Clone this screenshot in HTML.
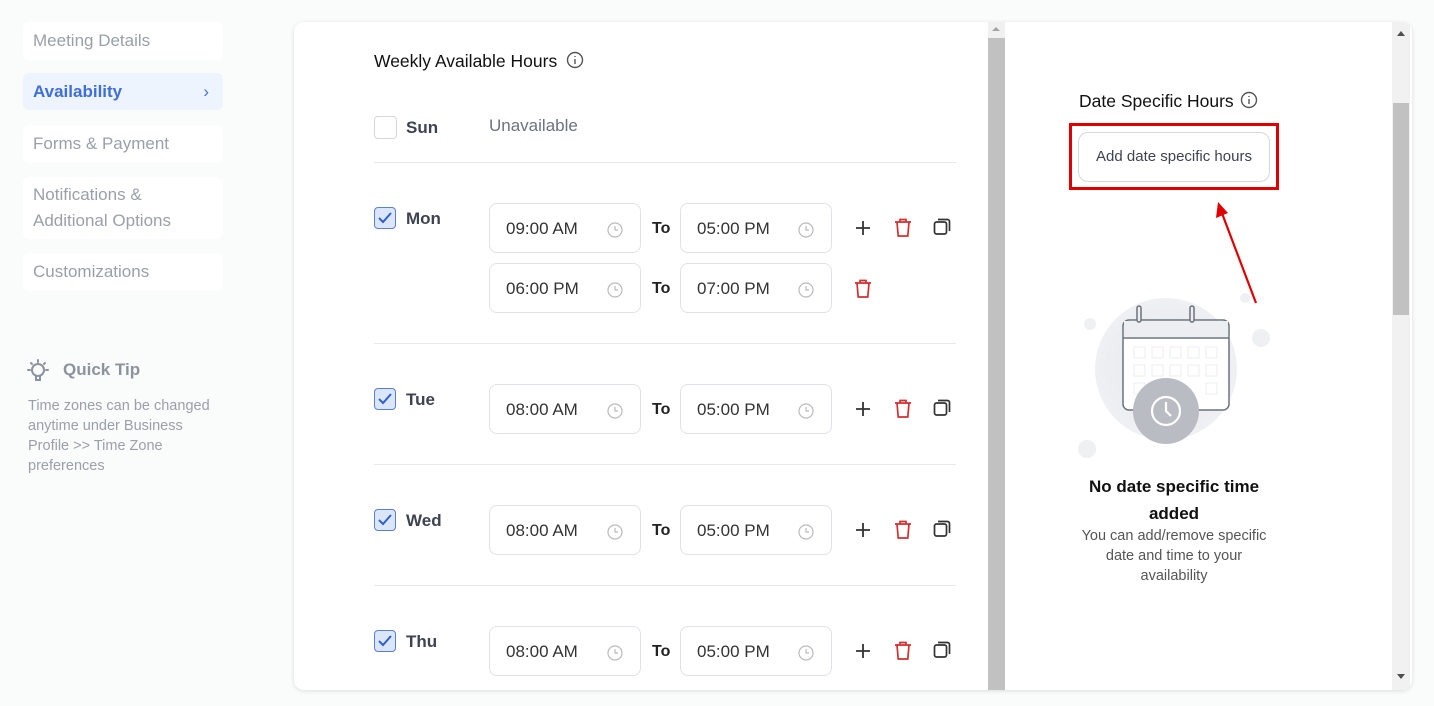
<!DOCTYPE html>
<html><head><meta charset="utf-8"><style>
*{box-sizing:border-box;margin:0;padding:0}
body{width:1434px;height:706px;background:#fafbfb;font-family:"Liberation Sans",sans-serif;position:relative;overflow:hidden}
.a{position:absolute}
.nav{position:absolute;left:23px;width:200px;background:#fff;border-radius:6px;color:#9aa0aa;font-size:17px;padding-left:10px}
.card{position:absolute;left:294px;top:22px;width:1118px;height:668px;background:#fff;border-radius:10px;box-shadow:0 1px 4px rgba(0,0,0,.12);overflow:hidden}
.cb{position:absolute;width:22px;height:22px;border-radius:4px;border:1.5px solid #5a7fd6;background:#dbe6fb}
.cb svg{position:absolute;left:3px;top:4px}
.day{position:absolute;font-size:17px;font-weight:bold;color:#3d4350}
.inp{position:absolute;width:152px;height:50px;border:1px solid #dfe2e6;border-radius:8px;font-size:17px;color:#333;padding:15px 0 0 16px}
.inp svg{position:absolute;right:17px;top:18px}
.to{position:absolute;font-size:16px;font-weight:bold;color:#222}
.hr{position:absolute;left:374px;width:582px;height:1px;background:#e6e8eb}
</style></head><body>
<div class="nav" style="top:22px;height:38px;line-height:38px">Meeting Details</div>
<div class="nav" style="top:73px;height:37px;line-height:37px;background:#eef4fd;color:#3e6fd8;font-weight:bold">Availability<span class="a" style="right:14px;top:0;font-weight:normal">&#x203A;</span></div>
<div class="nav" style="top:125px;height:38px;line-height:38px">Forms &amp; Payment</div>
<div class="nav" style="top:177px;height:62px;line-height:26px;padding-top:5px">Notifications &amp;<br>Additional Options</div>
<div class="nav" style="top:253px;height:38px;line-height:38px">Customizations</div>
<svg class="a" style="left:25px;top:358px" width="26" height="26" viewBox="0 0 26 26" fill="none" stroke="#8d939d" stroke-width="2"><circle cx="13" cy="12" r="6"/><path d="M11 18v4h4v-4"/><path d="M13 2v2M3 12h2M21 12h2M6 5l1 1M20 5l-1 1" stroke-linecap="round"/></svg>
<div class="a" style="left:63px;top:360px;font-size:17px;font-weight:bold;color:#8d939d">Quick Tip</div>
<div class="a" style="left:28px;top:396px;font-size:14.5px;line-height:20px;color:#9aa0aa;width:188px">Time zones can be changed anytime under Business Profile &gt;&gt; Time Zone preferences</div>

<div class="card">
 <div class="a" style="left:694px;top:0;width:17px;height:668px;background:#f1f1f1"></div>
 <div class="a" style="left:694px;top:16px;width:17px;height:652px;background:#c1c1c1"></div>
 <div class="a" style="left:698px;top:5px;width:0;height:0;border-left:4px solid transparent;border-right:4px solid transparent;border-bottom:4px solid #a3a3a3"></div>
 <div class="a" style="left:1098px;top:0;width:18px;height:668px;background:#f1f1f1"></div>
 <div class="a" style="left:1099px;top:81px;width:16px;height:212px;background:#c1c1c1"></div>
 <div class="a" style="left:1103px;top:9px;border-left:4px solid transparent;border-right:4px solid transparent;border-bottom:5px solid #505050"></div>
 <div class="a" style="left:1103px;top:652px;border-left:4px solid transparent;border-right:4px solid transparent;border-top:5px solid #505050"></div>
</div>

<div class="a" style="left:374px;top:51px;font-size:17.5px;color:#111">Weekly Available Hours</div>
<svg class="a" style="left:566px;top:51px" width="18" height="18" viewBox="0 0 18 18" fill="none" stroke="#555" stroke-width="1.4"><circle cx="9" cy="9" r="7.5"/><path d="M9 8v5M9 5v1"/></svg>
<div class="a" style="left:374px;top:116px;width:23px;height:23px;border:1.5px solid #d4d7dc;border-radius:4px"></div>
<div class="day" style="left:406px;top:118px">Sun</div>
<div class="a" style="left:489px;top:116px;font-size:17px;color:#6b7280">Unavailable</div>
<div class="hr" style="top:162px"></div>

<div class="cb" style="left:374px;top:207px"><svg width="14" height="12" viewBox="0 0 14 12" fill="none" stroke="#2f5fcf" stroke-width="2"><path d="M1 6l4 4 8-9"/></svg></div>
<div class="day" style="left:406px;top:209px">Mon</div>
<div class="cb" style="left:374px;top:388px"><svg width="14" height="12" viewBox="0 0 14 12" fill="none" stroke="#2f5fcf" stroke-width="2"><path d="M1 6l4 4 8-9"/></svg></div>
<div class="day" style="left:406px;top:390px">Tue</div>
<div class="cb" style="left:374px;top:509px"><svg width="14" height="12" viewBox="0 0 14 12" fill="none" stroke="#2f5fcf" stroke-width="2"><path d="M1 6l4 4 8-9"/></svg></div>
<div class="day" style="left:406px;top:511px">Wed</div>
<div class="cb" style="left:374px;top:630px"><svg width="14" height="12" viewBox="0 0 14 12" fill="none" stroke="#2f5fcf" stroke-width="2"><path d="M1 6l4 4 8-9"/></svg></div>
<div class="day" style="left:406px;top:632px">Thu</div>
<div class="hr" style="top:343px"></div>
<div class="hr" style="top:464px"></div>
<div class="hr" style="top:585px"></div>

<div class="inp" style="left:489px;top:203px">09:00 AM<svg width="16" height="16" viewBox="0 0 16 16" fill="none" stroke="#bbb" stroke-width="1.2"><circle cx="8" cy="8" r="7"/><path d="M8 4v4h3"/></svg></div>
<div class="to" style="left:652px;top:220px">To</div>
<div class="inp" style="left:680px;top:203px">05:00 PM<svg width="16" height="16" viewBox="0 0 16 16" fill="none" stroke="#bbb" stroke-width="1.2"><circle cx="8" cy="8" r="7"/><path d="M8 4v4h3"/></svg></div>
<div class="inp" style="left:489px;top:263px">06:00 PM<svg width="16" height="16" viewBox="0 0 16 16" fill="none" stroke="#bbb" stroke-width="1.2"><circle cx="8" cy="8" r="7"/><path d="M8 4v4h3"/></svg></div>
<div class="to" style="left:652px;top:280px">To</div>
<div class="inp" style="left:680px;top:263px">07:00 PM<svg width="16" height="16" viewBox="0 0 16 16" fill="none" stroke="#bbb" stroke-width="1.2"><circle cx="8" cy="8" r="7"/><path d="M8 4v4h3"/></svg></div>

<div class="inp" style="left:489px;top:384px">08:00 AM<svg width="16" height="16" viewBox="0 0 16 16" fill="none" stroke="#bbb" stroke-width="1.2"><circle cx="8" cy="8" r="7"/><path d="M8 4v4h3"/></svg></div>
<div class="to" style="left:652px;top:401px">To</div>
<div class="inp" style="left:680px;top:384px">05:00 PM<svg width="16" height="16" viewBox="0 0 16 16" fill="none" stroke="#bbb" stroke-width="1.2"><circle cx="8" cy="8" r="7"/><path d="M8 4v4h3"/></svg></div>
<div class="inp" style="left:489px;top:505px">08:00 AM<svg width="16" height="16" viewBox="0 0 16 16" fill="none" stroke="#bbb" stroke-width="1.2"><circle cx="8" cy="8" r="7"/><path d="M8 4v4h3"/></svg></div>
<div class="to" style="left:652px;top:522px">To</div>
<div class="inp" style="left:680px;top:505px">05:00 PM<svg width="16" height="16" viewBox="0 0 16 16" fill="none" stroke="#bbb" stroke-width="1.2"><circle cx="8" cy="8" r="7"/><path d="M8 4v4h3"/></svg></div>
<div class="inp" style="left:489px;top:626px">08:00 AM<svg width="16" height="16" viewBox="0 0 16 16" fill="none" stroke="#bbb" stroke-width="1.2"><circle cx="8" cy="8" r="7"/><path d="M8 4v4h3"/></svg></div>
<div class="to" style="left:652px;top:643px">To</div>
<div class="inp" style="left:680px;top:626px">05:00 PM<svg width="16" height="16" viewBox="0 0 16 16" fill="none" stroke="#bbb" stroke-width="1.2"><circle cx="8" cy="8" r="7"/><path d="M8 4v4h3"/></svg></div>

<svg class="a" style="left:854px;top:219px" width="18" height="18" viewBox="0 0 18 18" stroke="#333" stroke-width="1.8"><path d="M9 2v14M2 9h14"/></svg>
<svg class="a" style="left:894px;top:218px" width="18" height="20" viewBox="0 0 18 20" fill="none" stroke="#d32f2f" stroke-width="1.7"><path d="M1 4h16M6 4V1.5h6V4M3 4l1.2 14h9.6L15 4"/></svg>
<svg class="a" style="left:933px;top:217px" width="19" height="19" viewBox="0 0 19 19" fill="none" stroke="#333" stroke-width="1.7"><rect x="1.5" y="5" width="12" height="12" rx="2"/><path d="M5 2.5h9.5a2 2 0 0 1 2 2V14"/></svg>
<svg class="a" style="left:854px;top:279px" width="18" height="20" viewBox="0 0 18 20" fill="none" stroke="#d32f2f" stroke-width="1.7"><path d="M1 4h16M6 4V1.5h6V4M3 4l1.2 14h9.6L15 4"/></svg>

<svg class="a" style="left:854px;top:400px" width="18" height="18" viewBox="0 0 18 18" stroke="#333" stroke-width="1.8"><path d="M9 2v14M2 9h14"/></svg>
<svg class="a" style="left:894px;top:399px" width="18" height="20" viewBox="0 0 18 20" fill="none" stroke="#d32f2f" stroke-width="1.7"><path d="M1 4h16M6 4V1.5h6V4M3 4l1.2 14h9.6L15 4"/></svg>
<svg class="a" style="left:933px;top:398px" width="19" height="19" viewBox="0 0 19 19" fill="none" stroke="#333" stroke-width="1.7"><rect x="1.5" y="5" width="12" height="12" rx="2"/><path d="M5 2.5h9.5a2 2 0 0 1 2 2V14"/></svg>
<svg class="a" style="left:854px;top:521px" width="18" height="18" viewBox="0 0 18 18" stroke="#333" stroke-width="1.8"><path d="M9 2v14M2 9h14"/></svg>
<svg class="a" style="left:894px;top:520px" width="18" height="20" viewBox="0 0 18 20" fill="none" stroke="#d32f2f" stroke-width="1.7"><path d="M1 4h16M6 4V1.5h6V4M3 4l1.2 14h9.6L15 4"/></svg>
<svg class="a" style="left:933px;top:519px" width="19" height="19" viewBox="0 0 19 19" fill="none" stroke="#333" stroke-width="1.7"><rect x="1.5" y="5" width="12" height="12" rx="2"/><path d="M5 2.5h9.5a2 2 0 0 1 2 2V14"/></svg>
<svg class="a" style="left:854px;top:642px" width="18" height="18" viewBox="0 0 18 18" stroke="#333" stroke-width="1.8"><path d="M9 2v14M2 9h14"/></svg>
<svg class="a" style="left:894px;top:641px" width="18" height="20" viewBox="0 0 18 20" fill="none" stroke="#d32f2f" stroke-width="1.7"><path d="M1 4h16M6 4V1.5h6V4M3 4l1.2 14h9.6L15 4"/></svg>
<svg class="a" style="left:933px;top:640px" width="19" height="19" viewBox="0 0 19 19" fill="none" stroke="#333" stroke-width="1.7"><rect x="1.5" y="5" width="12" height="12" rx="2"/><path d="M5 2.5h9.5a2 2 0 0 1 2 2V14"/></svg>

<div class="a" style="left:1079px;top:91px;font-size:17.5px;color:#111">Date Specific Hours</div>
<svg class="a" style="left:1240px;top:91px" width="18" height="18" viewBox="0 0 18 18" fill="none" stroke="#555" stroke-width="1.4"><circle cx="9" cy="9" r="7.5"/><path d="M9 8v5M9 5v1"/></svg>
<div class="a" style="left:1069px;top:123px;width:210px;height:67px;border:3px solid #e00000"></div>
<div class="a" style="left:1078px;top:132px;width:192px;height:50px;border:1px solid #d6d8de;border-radius:10px;font-size:15px;color:#3d4350;text-align:center;line-height:48px">Add date specific hours</div>
<svg class="a" style="left:1210px;top:198px" width="60" height="110" viewBox="0 0 60 110"><path d="M46 105L10 10" stroke="#e00000" stroke-width="2.2"/><path d="M8 4l-2 16 12-5z" fill="#e00000"/></svg>

<svg class="a" style="left:1070px;top:284px" width="210" height="180" viewBox="0 0 210 180">
<defs><radialGradient id="g" cx=".5" cy=".5" r=".5"><stop offset="0" stop-color="#e4e6ea"/><stop offset="1" stop-color="#eef0f3"/></radialGradient></defs>
<circle cx="96" cy="85" r="71" fill="url(#g)"/>
<circle cx="20" cy="40" r="6" fill="#eef0f4"/><circle cx="175" cy="14" r="5" fill="#eef0f4"/><circle cx="191" cy="54" r="9" fill="#eef0f4"/><circle cx="17" cy="165" r="9" fill="#eef0f4"/>
<rect x="53" y="36" width="106" height="90" rx="6" fill="#fff" stroke="#6b7280" stroke-width="1.5"/>
<path d="M53 54h106" stroke="#6b7280" stroke-width="1.5"/>
<rect x="54" y="37" width="104" height="16" fill="#eceef2"/>
<rect x="67" y="22" width="4" height="16" rx="2" fill="#eee" stroke="#6b7280" stroke-width="1.5"/>
<rect x="120" y="22" width="4" height="16" rx="2" fill="#eee" stroke="#6b7280" stroke-width="1.5"/>
<g fill="none" stroke="#eeeff2" stroke-width="1.2"><rect x="64" y="63" width="11" height="11"/><rect x="82" y="63" width="11" height="11"/><rect x="100" y="63" width="11" height="11"/><rect x="118" y="63" width="11" height="11"/><rect x="136" y="63" width="11" height="11"/><rect x="64" y="81" width="11" height="11"/><rect x="82" y="81" width="11" height="11"/><rect x="100" y="81" width="11" height="11"/><rect x="118" y="81" width="11" height="11"/><rect x="136" y="81" width="11" height="11"/><rect x="64" y="99" width="11" height="11"/><rect x="136" y="99" width="11" height="11"/></g>
<circle cx="96" cy="127" r="33" fill="#b9bcc2"/>
<circle cx="96" cy="127" r="14" fill="none" stroke="#fff" stroke-width="2.2"/>
<path d="M96 118v9l5 5" fill="none" stroke="#fff" stroke-width="2.2"/>
</svg>
<div class="a" style="left:1064px;top:473px;width:220px;text-align:center;font-size:17px;font-weight:bold;color:#111;line-height:27px">No date specific time<br>added</div>
<div class="a" style="left:1077px;top:526px;width:194px;text-align:center;font-size:14.5px;color:#555;line-height:20px">You can add/remove specific date and time to your availability</div>
</body></html>
